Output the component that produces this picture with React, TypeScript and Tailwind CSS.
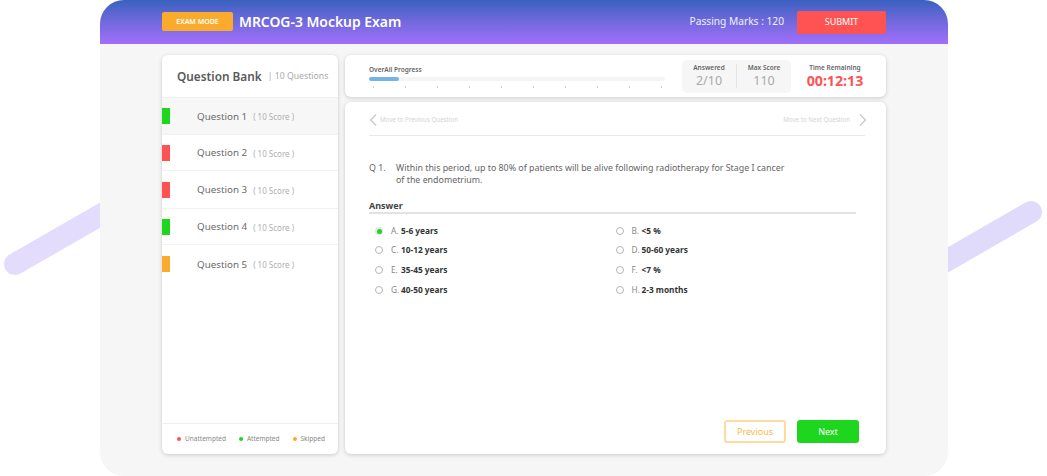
import { ChevronLeft, ChevronRight } from 'lucide-react';

const questions = [
  { name: 'Question 1', color: 'bg-[#1fd61f]', rowClass: 'h-[37px] bg-[#f7f7f7] border-b border-[#f2f2f2]' },
  { name: 'Question 2', color: 'bg-[#ff5252]', rowClass: 'h-[36px] border-b border-[#f2f2f2]' },
  { name: 'Question 3', color: 'bg-[#ff5252]', rowClass: 'h-[38px] border-b border-[#f2f2f2]' },
  { name: 'Question 4', color: 'bg-[#1fd61f]', rowClass: 'h-[36px] border-b border-[#f2f2f2]' },
  { name: 'Question 5', color: 'bg-[#fbab2b]', rowClass: 'h-[38px]' },
];

const options = [
  { key: 'A.', text: '5-6 years', selected: true, rowClass: 'h-[18px]' },
  { key: 'B.', text: '<5 %', rowClass: 'h-[18px]' },
  { key: 'C.', text: '10-12 years', rowClass: 'h-[20px]' },
  { key: 'D.', text: '50-60 years', rowClass: 'h-[20px]' },
  { key: 'E.', text: '35-45 years', rowClass: 'h-[20px]' },
  { key: 'F.', text: '<7 %', rowClass: 'h-[20px]' },
  { key: 'G.', text: '40-50 years', rowClass: 'h-[20px]' },
  { key: 'H.', text: '2-3 months', rowClass: 'h-[20px]' },
];

const legend = [
  { label: 'Unattempted', color: 'bg-[#ff5252]' },
  { label: 'Attempted', color: 'bg-[#1fd61f]' },
  { label: 'Skipped', color: 'bg-[#fbab2b]' },
];

function Progress() {
  return (
    <div className="w-[296px]">
      <div className="text-[6.5px] leading-[9px] font-semibold text-[#666]">OverAll Progress</div>
      <div className="mt-[3px] h-[4px] rounded-full bg-[#f5f5f5]">
        <div className="h-full w-[30px] rounded-full bg-[#74b3e6]" />
      </div>
      <div className="mt-[5px] flex justify-between pl-[4px] pr-[3px]">
        {[0, 1, 2, 3, 4, 5, 6, 7, 8, 9].map((tick) => (
          <span key={tick} className="h-[2px] w-[1px] bg-[#d0d0d0]" />
        ))}
      </div>
    </div>
  );
}

export default function App() {
  return (
    <div className="relative h-[476px] w-[1047px] overflow-hidden bg-white font-['Noto_Sans',sans-serif]">
      {/* Decorative bars behind the window */}
      <svg className="absolute inset-0" width="1047" height="476" fill="none">
        <path d="M15 264 L130 198" stroke="#e4dcfc" strokeWidth="22" strokeLinecap="round" />
        <path d="M1031 212 L920 276" stroke="#e0dbfb" strokeWidth="22" strokeLinecap="round" />
      </svg>

      <div className="relative mx-[100px] flex h-[476px] w-[848px] flex-col overflow-hidden rounded-[24px] bg-[#f6f6f6]">
        {/* Header */}
        <header className="flex h-[44px] shrink-0 items-center justify-between bg-gradient-to-b from-[#3861c0] to-[#a16ffb] pl-[62px] pr-[62px]">
          <div className="flex items-center">
            <span className="flex h-[19px] w-[71px] items-center justify-center rounded-[2px] bg-[#fbab2b] text-[7px] font-semibold text-white">
              EXAM MODE
            </span>
            <span className="ml-[6px] text-[13.9px] font-semibold text-white">MRCOG-3 Mockup Exam</span>
          </div>
          <div className="flex items-center">
            <span className="text-[10.2px] text-white/90">Passing Marks : 120</span>
            <button className="ml-[13px] flex h-[23px] w-[89px] items-center justify-center rounded-[2px] bg-[#ff5252] text-[9px] text-white">
              SUBMIT
            </button>
          </div>
        </header>

        <div className="flex flex-1 gap-[7px] pb-[22px] pl-[62px] pr-[62px] pt-[11px]">
          {/* Question bank */}
          <aside className="flex w-[176px] flex-col rounded-[6px] bg-white shadow-[0_1px_4px_rgba(0,0,0,0.18)]">
            <div className="flex h-[43px] items-center border-b border-[#f0f0f0] pl-[15px] pt-[2px]">
              <span className="text-[11.8px] font-semibold text-[#5a5a5a]">Question Bank</span>
              <span className="ml-[6px] text-[8.7px] text-[#aaa]">| 10 Questions</span>
            </div>
            {questions.map((q) => (
              <div key={q.name} className={`flex items-center ${q.rowClass}`}>
                <span className={`h-[16px] w-[8px] ${q.color}`} />
                <span className="ml-[27px] mt-[2px] text-[9.8px] text-[#6b6b6b]">{q.name}</span>
                <span className="ml-[6px] mt-[2px] text-[8px] text-[#b0b0b0]">( 10 Score )</span>
              </div>
            ))}
            <div className="mt-auto flex h-[31px] items-center justify-center gap-[13px] border-t border-[#f0f0f0] pl-[2px]">
              {legend.map((item) => (
                <span key={item.label} className="flex items-center gap-[4px] text-[6.5px] text-[#888]">
                  <span className={`h-[4px] w-[4px] rounded-full ${item.color}`} />
                  {item.label}
                </span>
              ))}
            </div>
          </aside>

          <main className="flex w-[541px] flex-col gap-[5px]">
            {/* Progress and stats */}
            <div className="flex h-[42px] items-center justify-between rounded-[6px] bg-white pl-[24px] pr-[20px] shadow-[0_1px_4px_rgba(0,0,0,0.18)]">
              <Progress />
              <div className="flex items-center">
                <div className="flex h-[33px] w-[109px] items-center rounded-[5px] bg-[#f6f6f6]">
                  <div className="flex flex-1 flex-col items-center">
                    <span className="text-[6.5px] leading-[9px] font-semibold text-[#666]">Answered</span>
                    <span className="text-[12.5px] leading-[17px] text-[#aaa]">2/10</span>
                  </div>
                  <div className="h-[24px] w-px bg-[#e4e4e4]" />
                  <div className="flex flex-1 flex-col items-center">
                    <span className="text-[6.5px] leading-[9px] font-semibold text-[#666]">Max Score</span>
                    <span className="text-[12.5px] leading-[17px] text-[#aaa]">110</span>
                  </div>
                </div>
                <div className="ml-[13px] flex w-[62px] flex-col items-center">
                  <span className="text-[6.5px] leading-[9px] font-semibold text-[#666]">Time Remaining</span>
                  <span className="text-[14.2px] leading-[18px] font-bold text-[#ff5252]">00:12:13</span>
                </div>
              </div>
            </div>

            {/* Question card */}
            <div className="flex flex-1 flex-col rounded-[6px] bg-white pl-[24px] pr-[27px] shadow-[0_1px_4px_rgba(0,0,0,0.18)]">
              <div className="-mr-[6px] flex h-[34px] shrink-0 items-center justify-between border-b border-[#e8e8e8] pt-[2px]">
                <span className="flex items-center text-[6.2px] text-[#d4d4d4]">
                  <ChevronLeft className="-ml-[6.5px] -mr-[2.5px]" size={20} color="#cfcfcf" strokeWidth={2} />
                  Move to Previous Question
                </span>
                <span className="flex items-center text-[6.2px] text-[#d4d4d4]">
                  Move to Next Question
                  <ChevronRight className="-mr-[7.5px] ml-[2.5px]" size={20} color="#cfcfcf" strokeWidth={2} />
                </span>
              </div>

              <div className="mt-[26px] flex text-[8.85px] leading-[12px] text-[#666]">
                <span className="w-[27px] shrink-0">Q 1.</span>
                <p className="w-[392px]">
                  Within this period, up to 80% of patients will be alive following radiotherapy for Stage I cancer of the endometrium.
                </p>
              </div>

              <div className="mt-[14px] w-[487px] border-b-2 border-[#e2e2e2] pb-[1px] text-[9px] leading-[11px] font-bold text-[#444]">
                Answer
              </div>

              <div className="mt-[8px] grid w-[487px] grid-cols-2 pl-[6px]">
                {options.map((opt) => (
                  <div key={opt.key} className={`flex items-center text-[8.3px] ${opt.rowClass}`}>
                    {opt.selected ? (
                      <span className="flex h-[8px] w-[8px] items-center justify-center rounded-full bg-[#e4e4e4]">
                        <span className="h-[5px] w-[5px] rounded-full bg-[#1fd61f]" />
                      </span>
                    ) : (
                      <span className="h-[8px] w-[8px] rounded-full border border-[#b5b5b5]" />
                    )}
                    <span className="ml-[8px] w-[10px] text-[#888]">{opt.key}</span>
                    <span className="font-bold text-[#333]">{opt.text}</span>
                  </div>
                ))}
              </div>

              <div className="mt-auto flex justify-end gap-[11px] pb-[11px]">
                <button className="flex h-[23px] w-[62px] items-center justify-center rounded-[3px] border-2 border-[#fddaa2] text-[9px] text-[#fbb84d]">
                  Previous
                </button>
                <button className="flex h-[23px] w-[62px] items-center justify-center rounded-[3px] bg-[#1fd61f] text-[9px] text-white">
                  Next
                </button>
              </div>
            </div>
          </main>
        </div>
      </div>
    </div>
  );
}
